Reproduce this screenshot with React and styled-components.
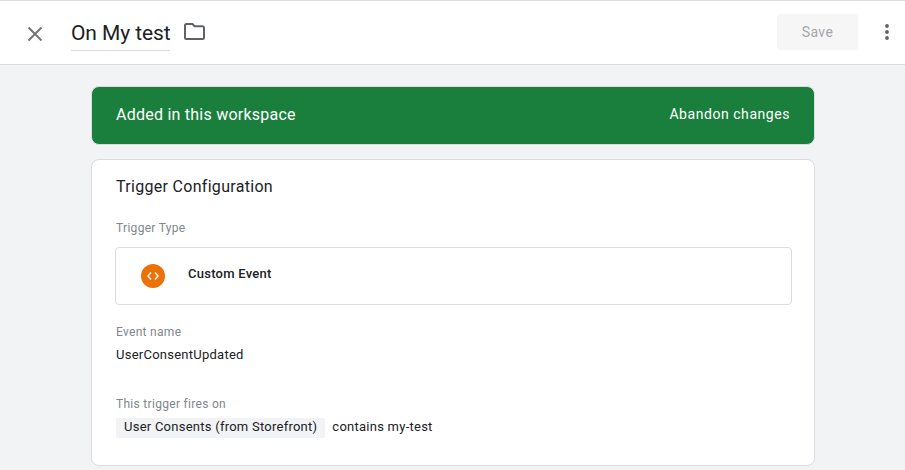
import React from 'react'
import styled, { createGlobalStyle } from 'styled-components'

const GlobalStyle = createGlobalStyle`
    html, body {
        margin: 0;
        padding: 0;
        height: 100%;
        overflow: hidden;
        background: #f1f3f4;
        font-family: Roboto, "Liberation Sans", sans-serif;
        color: #202124;
    }
`

const Page = styled.div`
    width: 905px;
    height: 470px;
    overflow: hidden;
`

const TopBar = styled.header`
    box-sizing: border-box;
    height: 65px;
    display: flex;
    align-items: center;
    background: #fff;
    border-top: 1px solid #dadce0;
    border-bottom: 1px solid #dadce0;
    padding: 0 8px 0 24px;
`

const CloseButton = styled.button`
    width: 22px;
    height: 22px;
    padding: 0;
    border: 0;
    background: none;
    display: flex;
    align-items: center;
    justify-content: center;
    margin-top: 2px;
    margin-right: 25px;
`

const Title = styled.div`
    font-size: 21px;
    line-height: 32px;
    height: 34px;
    box-sizing: border-box;
    border-bottom: 1px solid #dadce0;
    margin-top: 2px;
    margin-right: 14px;
    letter-spacing: -0.1px;
`

const FolderButton = styled.button`
    width: 22px;
    height: 22px;
    padding: 0;
    border: 0;
    background: none;
    display: flex;
    align-items: center;
    margin-bottom: 2px;
`

const SaveButton = styled.button`
    width: 81px;
    height: 36px;
    margin-left: auto;
    margin-bottom: 2px;
    border: 0;
    border-radius: 4px;
    background: #f6f6f7;
    color: #a5a7aa;
    font: 400 14px Roboto, sans-serif;
    letter-spacing: 0.4px;
`

const MoreButton = styled.button`
    width: 20px;
    height: 24px;
    margin: 0 0 2px 19px;
    padding: 0;
    border: 0;
    background: none;
    display: flex;
    align-items: center;
    justify-content: center;
`

const Content = styled.main`
    width: 724px;
    margin: 21px 0 0 91px;
    display: flex;
    flex-direction: column;
    gap: 14px;
`

const Banner = styled.div`
    box-sizing: border-box;
    height: 59px;
    display: flex;
    align-items: center;
    justify-content: space-between;
    padding: 0 24px 3px;
    background: #1a7f3c;
    border: 1px solid #dadce0;
    border-radius: 8px;
    color: #fff;
`

const BannerTitle = styled.span`
    font-size: 16px;
    letter-spacing: 0.24px;
`

const BannerAction = styled.span`
    font-size: 14px;
    font-weight: 400;
    letter-spacing: 0.55px;
`

const Card = styled.section`
    box-sizing: border-box;
    height: 307px;
    padding: 17px 23px 0 24px;
    background: #fff;
    border: 1px solid #dadce0;
    border-radius: 8px;
`

const CardTitle = styled.h2`
    margin: 0 0 23px;
    font-size: 16px;
    line-height: 20px;
    font-weight: 400;
    letter-spacing: 0.3px;
`

const Label = styled.div`
    font-size: 12px;
    line-height: 16px;
    color: #80868b;
    letter-spacing: 0.3px;
    margin-bottom: ${props => props.gap}px;
`

const TypeBox = styled.div`
    box-sizing: border-box;
    height: 58px;
    display: flex;
    align-items: center;
    margin-left: -1px;
    margin-right: -1px;
    padding: 0 0 2px 25px;
    border: 1px solid #dadce0;
    border-radius: 4px;
    margin-bottom: 19px;
`

const TypeIcon = styled.span`
    width: 24px;
    height: 24px;
    border-radius: 50%;
    background: #ec7108;
    display: flex;
    align-items: center;
    justify-content: center;
    margin: 2px 23px 0 0;
`

const TypeName = styled.span`
    font-size: 13px;
    line-height: 16px;
    font-weight: 500;
    letter-spacing: 0.25px;
    margin-bottom: 2px;
`

const Value = styled.div`
    font-size: 13px;
    line-height: 16px;
    letter-spacing: 0.25px;
    margin-bottom: 33px;
`

const Condition = styled.div`
    display: flex;
    align-items: center;
    gap: 7px;
    font-size: 13px;
    letter-spacing: 0.25px;
`

const Chip = styled.span`
    height: 20px;
    line-height: 17px;
    padding: 0 8px;
    background: #f1f3f4;
    border-radius: 2px;
`

const ConditionText = styled.span`
    height: 20px;
    line-height: 17px;
`

const App = () => {
    return (
        <Page>
            <GlobalStyle />
            <TopBar>
                <CloseButton>
                    <svg width="16" height="16" viewBox="0 0 16 16">
                        <path d="M1.5 1.5l13 13M14.5 1.5l-13 13" stroke="#757575" strokeWidth="2" fill="none" />
                    </svg>
                </CloseButton>
                <Title>On My test</Title>
                <FolderButton>
                    <svg width="21" height="17" viewBox="0 0 21 17">
                        <path d="M2.5 1h6l2 2.2h8a1.5 1.5 0 0 1 1.5 1.5v9.8a1.5 1.5 0 0 1-1.5 1.5h-16A1.5 1.5 0 0 1 1 14.5v-12A1.5 1.5 0 0 1 2.5 1z" stroke="#5f6368" strokeWidth="2" fill="none" />
                    </svg>
                </FolderButton>
                <SaveButton>Save</SaveButton>
                <MoreButton>
                    <svg width="6" height="18" viewBox="0 0 6 18" fill="#5f6368">
                        <circle cx="3" cy="3" r="1.9" />
                        <circle cx="3" cy="9" r="1.9" />
                        <circle cx="3" cy="15" r="1.9" />
                    </svg>
                </MoreButton>
            </TopBar>
            <Content>
                <Banner>
                    <BannerTitle>Added in this workspace</BannerTitle>
                    <BannerAction>Abandon changes</BannerAction>
                </Banner>
                <Card>
                    <CardTitle>Trigger Configuration</CardTitle>
                    <Label gap={11}>Trigger Type</Label>
                    <TypeBox>
                        <TypeIcon>
                            <svg width="12" height="10" viewBox="0 0 12 10">
                                <path d="M4 1.5L1 5l3 3.5M8 1.5L11 5 8 8.5" stroke="#fff" strokeWidth="1.4" fill="none" />
                            </svg>
                        </TypeIcon>
                        <TypeName>Custom Event</TypeName>
                    </TypeBox>
                    <Label gap={7}>Event name</Label>
                    <Value>UserConsentUpdated</Value>
                    <Label gap={6}>This trigger fires on</Label>
                    <Condition>
                        <Chip>User Consents (from Storefront)</Chip>
                        <ConditionText>contains my-test</ConditionText>
                    </Condition>
                </Card>
            </Content>
        </Page>
    )
}

export default App
